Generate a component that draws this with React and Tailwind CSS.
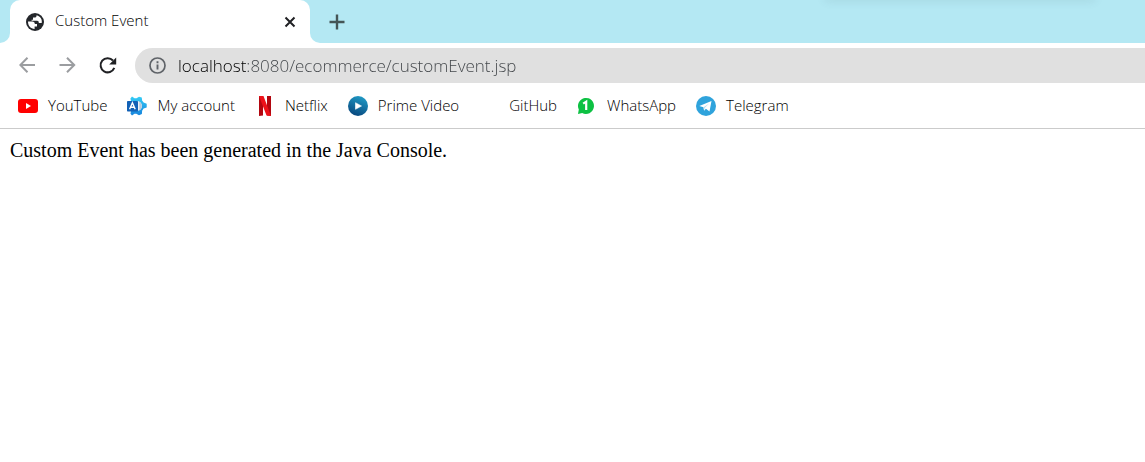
import React, { useState } from "react";

function GlobeIcon() {
  return (
    <svg viewBox="0 0 18 18" className="size-[18px] shrink-0" aria-hidden="true">
      <circle cx="9" cy="9" r="9" fill="#24272b" />
      <path d="M2 8.600h4.200c1.700 0 2.600.9 2.600 2.300h2.200v2.600H8.600v2.500C4.700 16 1.900 12.700 2 8.600Z" fill="#fff" />
      <path d="M10.600 2.200c0 1.500-.7 2.400-2.200 2.400H7v2.200H5.600v1h5.500c1.300 0 1.700.8 1.700 2.100h2.900c.8-3.300-1.200-6.600-5.100-7.700Z" fill="#fff" />
    </svg>
  );
}

function BackIcon() {
  return (
    <svg viewBox="0 0 18 18" className="size-[18px]" fill="none" stroke="#9b9da0" strokeWidth="2" aria-hidden="true">
      <path d="M16 8H1.500M8.500 .8 1.300 8l7.200 7.200" />
    </svg>
  );
}

function ForwardIcon() {
  return (
    <svg viewBox="0 0 18 18" className="size-[18px]" fill="none" stroke="#9b9da0" strokeWidth="2" aria-hidden="true">
      <path d="M.5 8h15M8 .8 15.200 8 8 15.200" />
    </svg>
  );
}

function ReloadIcon() {
  return (
    <svg viewBox="0 0 18 18" className="size-[18px]" aria-hidden="true">
      <path d="M15.300 10.900A7.100 7.100 0 1 1 14 3.500" fill="none" stroke="#202124" strokeWidth="2" />
      <path d="M17.200 .5v7h-7Z" fill="#202124" />
    </svg>
  );
}

function InfoIcon() {
  return (
    <svg viewBox="0 0 17 17" className="size-[17px] shrink-0" fill="none" stroke="#5f6368" aria-hidden="true">
      <circle cx="8.500" cy="8.500" r="7.500" strokeWidth="1.700" />
      <path d="M8.500 7.500v5M8.500 4.300v1.900" strokeWidth="1.900" />
    </svg>
  );
}

function YouTubeIcon() {
  return (
    <svg viewBox="0 0 20 20" className="size-5" aria-hidden="true">
      <rect x="0" y="3" width="20" height="14" rx="3" fill="#f00" />
      <path d="M8 7v6l5-3Z" fill="#fff" />
    </svg>
  );
}

function AccountIcon() {
  return (
    <svg viewBox="0 0 20 20" className="size-5" aria-hidden="true">
      <defs>
        <linearGradient id="gear" x1="0" y1="0" x2="0" y2="1">
          <stop offset="0" stopColor="#35cdf6" />
          <stop offset="1" stopColor="#1683dc" />
        </linearGradient>
      </defs>
      <path d="m5 .5 2.500 1.800h2L12 .7l2.800.8.3 3 1.500 2 3.100 1.300v3.600l-3.100 1.200-1.500 2.100-.2 3.200-2.900 1.400-2.700-1.600H7.500L5 19.500l-1.500-1.700.6-3.300V5.600l-.7-3Z" fill="url(#gear)" />
      <path d="M10 5a5 5 0 0 1 0 10Z" fill="#eef1f6" />
      <path d="M12.300 5.800v8.600a5 5 0 0 0 0-8.600Z" fill="#b5c8db" />
      <rect y="5" width="11" height="10.500" rx=".7" fill="#1261b6" />
      <path d="m2.600 13.300 2.800-6.600 2.800 6.600M3.700 11.300h3.400" stroke="#fff" strokeWidth="1.400" fill="none" />
    </svg>
  );
}

function NetflixIcon() {
  return (
    <svg viewBox="0 0 20 20" className="size-5" aria-hidden="true">
      <path d="M4 0h4v19.500L4 20ZM12 0h4v20l-4-.5Z" fill="#b20710" />
      <path d="M4 0h4.500L16 20l-4.500-.5Z" fill="#ed1119" />
    </svg>
  );
}

function PrimeIcon() {
  return (
    <svg viewBox="0 0 20 20" className="size-5" aria-hidden="true">
      <defs>
        <linearGradient id="prime" x1=".7" y1="0" x2=".3" y2="1">
          <stop offset="0" stopColor="#209bc6" />
          <stop offset="1" stopColor="#07457c" />
        </linearGradient>
      </defs>
      <circle cx="10" cy="10" r="10" fill="url(#prime)" />
      <path d="M7.500 6.700v6.600l6-3.300Z" fill="#fff" stroke="#fff" strokeWidth=".6" strokeLinejoin="round" />
    </svg>
  );
}

function WhatsAppIcon() {
  return (
    <svg viewBox="0 0 20 20" className="size-5" aria-hidden="true">
      <path d="M1 18 1.800 13.500A8 8 0 1 1 5.200 17Z" fill="#0dc143" />
      <path d="M6.200 7.700 9.200 5.700V14" fill="none" stroke="#fff" strokeWidth="2.200" />
    </svg>
  );
}

function TelegramIcon() {
  return (
    <svg viewBox="0 0 20 20" className="size-5" aria-hidden="true">
      <circle cx="10" cy="10" r="10" fill="#2fa3dc" />
      <path d="M3.300 10 15.500 5l-2 10.500-3.600-2.700-1.800 2-.7-3.600Z" fill="#fff" />
      <path d="m7.600 11.200 5.500-3.700-4.500 4.500-.5 2.600Z" fill="#b7ddef" />
    </svg>
  );
}

const bookmarks = [
  { label: "YouTube", href: "#youtube", icon: <YouTubeIcon /> },
  { label: "My account", href: "#account", icon: <AccountIcon /> },
  { label: "Netflix", href: "#netflix", icon: <NetflixIcon /> },
  { label: "Prime Video", href: "#prime", icon: <PrimeIcon /> },
  { label: "GitHub", href: "#github", icon: null },
  { label: "WhatsApp", href: "#whatsapp", icon: <WhatsAppIcon /> },
  { label: "Telegram", href: "#telegram", icon: <TelegramIcon /> },
];

function TabStrip() {
  return (
    <div className="relative flex h-[43px] overflow-hidden bg-white">
      <div className="w-[10px] shrink-0 rounded-br-[10px] bg-[#b4e8f3]" />
      <div className="w-[300px] shrink-0 bg-linear-to-b from-[#b4e8f3] from-50% to-white to-50%">
        <div className="flex h-full items-center rounded-t-[10px] bg-white pr-3 pl-4">
          <GlobeIcon />
          <span className="ml-[11px] flex-1 pb-[2px] text-[15px] font-light text-black">Custom Event</span>
          <button type="button" aria-label="Close tab" className="flex size-4 items-center justify-center">
            <svg viewBox="0 0 12 12" className="size-3" stroke="#202124" strokeWidth="2" aria-hidden="true">
              <path d="m1.500 1.500 9 9M10.500 1.500l-9 9" />
            </svg>
          </button>
        </div>
      </div>
      <div className="flex flex-1 items-center rounded-bl-[10px] bg-[#b4e8f3] pl-[18px]">
        <button type="button" aria-label="New tab" className="flex size-[18px] items-center justify-center">
          <svg viewBox="0 0 16 16" className="size-4" stroke="#455556" strokeWidth="2.400" aria-hidden="true">
            <path d="M8 .5v15M.5 8h15" />
          </svg>
        </button>
      </div>
      <div className="absolute -top-1 right-[50px] h-1 w-[270px] shadow-[0_0_10px_rgba(60,90,100,0.2)]" />
    </div>
  );
}

function Toolbar() {
  const [url, setUrl] = useState("localhost:8080/ecommerce/customEvent.jsp");
  return (
    <div className="flex items-center pt-[5px] pl-[19px]">
      <div className="flex items-center gap-[22px] pr-[18px]">
        <button type="button" aria-label="Back"><BackIcon /></button>
        <button type="button" aria-label="Forward"><ForwardIcon /></button>
        <button type="button" aria-label="Reload"><ReloadIcon /></button>
      </div>
      <div className="flex h-[35px] flex-1 items-center gap-3 rounded-l-full bg-[#e0e0e0] pl-[14px]">
        <InfoIcon />
        <input
          type="text"
          aria-label="Address"
          value={url}
          onChange={(e) => setUrl(e.target.value)}
          className="min-w-0 flex-1 bg-linear-to-r from-black from-[68px] to-[#3f4347] to-[68px] bg-clip-text text-[17px] font-light text-transparent caret-black outline-none"
        />
      </div>
    </div>
  );
}

export default function App() {
  return (
    <div className="min-h-screen bg-white font-['Open_Sans',sans-serif]">
      <header className="border-b border-[#cbcbcb]">
        <TabStrip />
        <Toolbar />
        <nav aria-label="Bookmarks" className="flex h-[45px] items-center gap-5 pl-[18px]">
          {bookmarks.map((b) => (
            <a key={b.label} href={b.href} className="flex items-center gap-[10px] text-[15px] font-light whitespace-nowrap text-black">
              <span className="size-5">{b.icon}</span>
              {b.label}
            </a>
          ))}
        </nav>
      </header>
      <main className="px-[10px] py-[9px]">
        <p className="font-['Liberation_Serif',serif] text-xl leading-6 text-black">
          Custom Event has been generated in the Java Console.
        </p>
      </main>
    </div>
  );
}
